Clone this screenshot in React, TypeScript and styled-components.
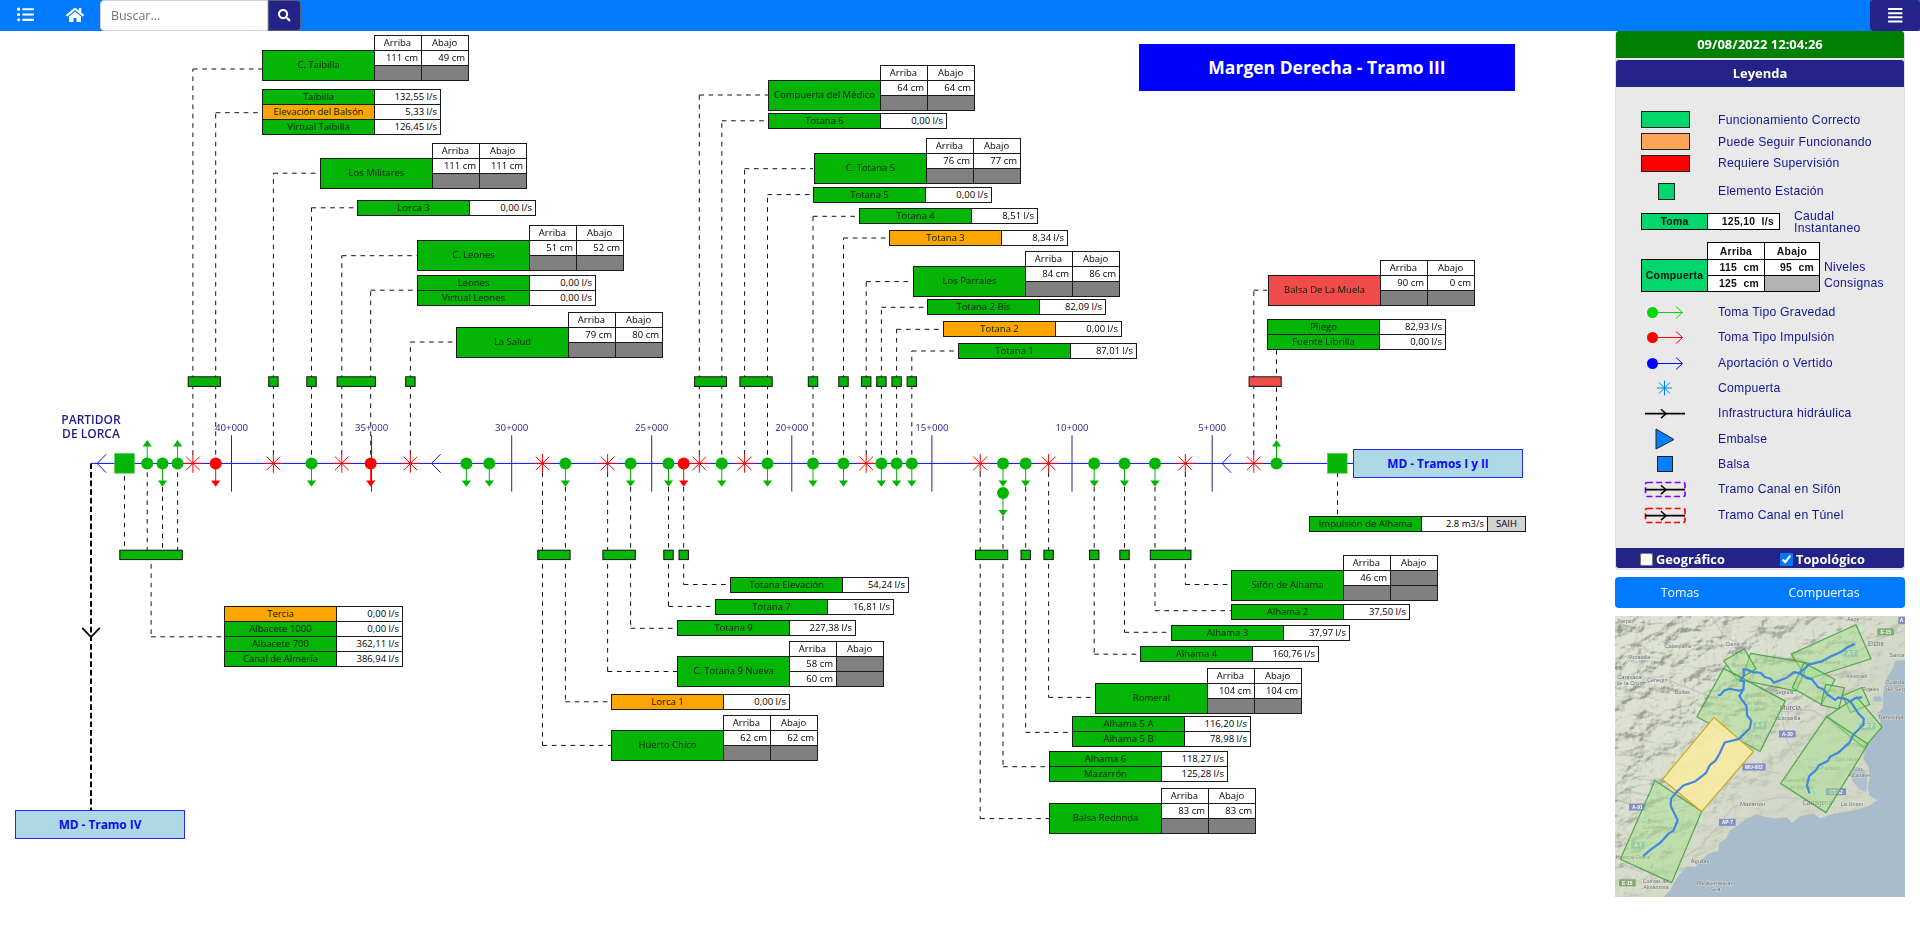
import React from 'react';
import styled, { createGlobalStyle } from 'styled-components';
import { FaListUl, FaHome, FaSearch, FaAlignJustify } from 'react-icons/fa';

const UI = '"Open Sans", "Noto Sans", sans-serif';
const GREEN = '#05b505';
const ORANGE = '#ffa500';
const RED = '#f04c4c';
const NAVY = '#232388';

const GlobalStyle = createGlobalStyle`
  * { box-sizing: border-box; }
  body { margin: 0; background: #fff; font-family: ${UI}; overflow: hidden; }
`;

/* ---------- page frame ---------- */

const Page = styled.div`
  display: flex;
  flex-direction: column;
  width: 1920px;
  height: 937px;
`;

const Navbar = styled.header`
  display: flex;
  height: 31px;
  flex: none;
  background: #007bff;
  color: #fff;
`;

const NavIcon = styled.button<{ $w: number; $size: number; $pad: number }>`
  display: flex;
  width: ${(p) => p.$w}px;
  padding: 0 0 2px ${(p) => p.$pad}px;
  align-items: center;
  border: 0;
  background: none;
  color: inherit;
  font-size: ${(p) => p.$size}px;
`;

const SearchInput = styled.input`
  width: 168px;
  height: 31px;
  padding: 0 10px;
  border: 1px solid #ced4da;
  border-radius: 4px 0 0 4px;
  font: 12.4px ${UI};
  color: #495057;
  outline: none;
  &::placeholder { color: #6c757d; opacity: 1; }
`;

const SearchButton = styled.button`
  display: flex;
  width: 33px;
  height: 31px;
  align-items: center;
  justify-content: center;
  padding: 0;
  border: 1px solid #55607a;
  border-radius: 0 4px 4px 0;
  background: ${NAVY};
  color: #fff;
  font-size: 12.5px;
`;

const MenuButton = styled.button`
  display: flex;
  width: 50px;
  margin-left: auto;
  align-items: center;
  justify-content: center;
  border: 0;
  border-radius: 4px;
  background: ${NAVY};
  color: #fff;
  font-size: 16.5px;
`;

const Main = styled.main`
  display: flex;
  flex: 1;
`;

/* ---------- diagram ---------- */

const Canvas = styled.section`
  position: relative;
  width: 1615px;
  flex: none;
`;

const Wires = styled.svg`
  position: absolute;
  left: 0;
  top: 0;
`;

const Node = styled.div<{ $x: number; $y: number }>`
  position: absolute;
  left: ${(p) => p.$x}px;
  top: ${(p) => p.$y - 31}px;
  display: flex;
  align-items: flex-end;
  font-size: 9.5px;
  line-height: 14px;
  color: #000;
  white-space: nowrap;
`;

const FlowTable = styled.div<{ $extra?: boolean }>`
  display: grid;
  grid-template-columns: 111px 65px ${(p) => (p.$extra ? '37px' : '')};
  grid-auto-rows: 14px;
  gap: 1px;
  padding: 1px;
  background: #1a1a1a;
`;

const NameCell = styled.div<{ $bg: string }>`
  background: ${(p) => p.$bg};
  color: #001e00;
  text-align: center;
`;

const GateName = styled(NameCell)`
  width: 113px;
  height: 31px;
  border: 1px solid #1a1a1a;
  line-height: 28px;
`;

const LevelTable = styled.div`
  display: grid;
  grid-template-columns: 46px 46px;
  grid-auto-rows: 14px;
  gap: 1px;
  padding: 1px;
  margin-left: -1px;
  background: #1a1a1a;
`;

const HeadCell = styled.div`
  background: #fff;
  text-align: center;
  padding-right: 1px;
`;

const ValueCell = styled.div<{ $empty?: boolean }>`
  padding-right: 3px;
  background: ${(p) => (p.$empty ? '#808080' : '#fff')};
  text-align: right;
`;

const TagCell = styled.div`
  background: #d3d3d3;
  text-align: center;
`;

const Title = styled.h1`
  position: absolute;
  left: 1139px;
  top: 13px;
  width: 376px;
  height: 47px;
  margin: 0;
  background: #00f;
  color: #fff;
  font-size: 17.5px;
  font-weight: 700;
  line-height: 47px;
  text-align: center;
`;

const SectionLink = styled.a<{ $x: number; $y: number; $w: number }>`
  position: absolute;
  left: ${(p) => p.$x}px;
  top: ${(p) => p.$y - 31}px;
  width: ${(p) => p.$w}px;
  height: 29px;
  border: 1px solid #2525f5;
  background: #add8e6;
  color: #0c0cf0;
  font-size: 11.8px;
  font-weight: 700;
  line-height: 27px;
  text-align: center;
`;

const Place = styled.div`
  position: absolute;
  left: 41px;
  top: 382px;
  width: 100px;
  color: #1f1f8a;
  font-size: 12px;
  font-weight: 600;
  line-height: 14px;
  text-align: center;
`;

const Km = styled.div<{ $x: number }>`
  position: absolute;
  left: ${(p) => p.$x - 30}px;
  top: 390px;
  width: 60px;
  color: #26268c;
  font-size: 9.7px;
  line-height: 14px;
  text-align: center;
`;

type Flow = { x: number; y: number; rows: [string, string, string?][] };
const flows: Flow[] = [
  { x: 262, y: 89, rows: [['Taibilla', '132,55'], ['Elevación del Balsón', '5,33', ORANGE], ['Virtual Taibilla', '126,45']] },
  { x: 357, y: 200, rows: [['Lorca 3', '0,00']] },
  { x: 417, y: 275, rows: [['Leones', '0,00'], ['Virtual Leones', '0,00']] },
  { x: 768, y: 113, rows: [['Totana 6', '0,00']] },
  { x: 813, y: 187, rows: [['Totana 5', '0,00']] },
  { x: 859, y: 208, rows: [['Totana 4', '8,51']] },
  { x: 889, y: 230, rows: [['Totana 3', '8,34', ORANGE]] },
  { x: 927, y: 299, rows: [['Totana 2 Bis', '82,09']] },
  { x: 943, y: 321, rows: [['Totana 2', '0,00', ORANGE]] },
  { x: 958, y: 343, rows: [['Totana 1', '87,01']] },
  { x: 1267, y: 319, rows: [['Pliego', '82,93'], ['Fuente Librilla', '0,00']] },
  { x: 224, y: 606, rows: [['Tercia', '0,00', ORANGE], ['Albacete 1000', '0,00'], ['Albacete 700', '362,11'], ['Canal de Almería', '386,94']] },
  { x: 730, y: 577, rows: [['Totana Elevación', '54,24']] },
  { x: 715, y: 599, rows: [['Totana 7', '16,81']] },
  { x: 677, y: 620, rows: [['Totana 9', '227,38']] },
  { x: 611, y: 694, rows: [['Lorca 1', '0,00', ORANGE]] },
  { x: 1231, y: 604, rows: [['Alhama 2', '37,50']] },
  { x: 1171, y: 625, rows: [['Alhama 3', '37,97']] },
  { x: 1140, y: 646, rows: [['Alhama 4', '160,76']] },
  { x: 1072, y: 716, rows: [['Alhama 5 A', '116,20'], ['Alhama 5 B', '78,98']] },
  { x: 1049, y: 751, rows: [['Alhama 6', '118,27'], ['Mazarrón', '125,28']] },
];

/* y is the top of the header row, one row above the name box */
type Gate = { x: number; y: number; name: string; cells: (number | null)[]; bg?: string };
const gates: Gate[] = [
  { x: 262, y: 35, name: 'C. Taibilla', cells: [111, 49, null, null] },
  { x: 320, y: 143, name: 'Los Militares', cells: [111, 111, null, null] },
  { x: 417, y: 225, name: 'C. Leones', cells: [51, 52, null, null] },
  { x: 456, y: 312, name: 'La Salud', cells: [79, 80, null, null] },
  { x: 768, y: 65, name: 'Compuerta del Médico', cells: [64, 64, null, null] },
  { x: 814, y: 138, name: 'C. Totana 5', cells: [76, 77, null, null] },
  { x: 913, y: 251, name: 'Los Parrales', cells: [84, 86, null, null] },
  { x: 1268, y: 260, name: 'Balsa De La Muela', cells: [90, 0, null, null], bg: RED },
  { x: 677, y: 641, name: 'C. Totana 9 Nueva', cells: [58, null, 60, null] },
  { x: 611, y: 715, name: 'Huerto Chico', cells: [62, 62, null, null] },
  { x: 1231, y: 555, name: 'Sifón de Alhama', cells: [46, null, null, null] },
  { x: 1095, y: 668, name: 'Romeral', cells: [104, 104, null, null] },
  { x: 1049, y: 788, name: 'Balsa Redonda', cells: [83, 83, null, null] },
];

const AXIS = 463.4;

/* [x, y of the elbow, x where the wire meets its box] */
const upper: [number, number, number][] = [
  [192.9, 69, 262], [215.7, 112.7, 262], [273.4, 173.2, 320], [311.5, 207.8, 357], [341.8, 255.7, 417],
  [370.7, 290.2, 417], [410.4, 342, 456], [699.3, 95, 768], [721.8, 120.8, 768], [744.6, 168.7, 813],
  [767.5, 194.6, 813], [813, 216.3, 859], [843.5, 238, 889], [866.2, 281.6, 912], [881.4, 307.3, 927],
  [896.6, 329.3, 943], [911.8, 351, 958], [1253.8, 290.2, 1267],
];
/* [x, y where the wire leaves the symbol, y of the elbow, x of the box] */
const lower: [number, number, number, number][] = [
  [542.5, 472.3, 745.4, 611], [565.4, 487, 701.8, 611], [607.6, 472.3, 671.5, 677], [630.6, 487, 628.3, 677],
  [668.5, 487, 606.4, 715], [683.7, 487, 584.5, 730], [980.2, 472.3, 818.6, 1049], [1003, 516, 766.7, 1049],
  [1025.7, 487, 732.4, 1072], [1048.6, 472.3, 697.4, 1095], [1094.2, 487, 654.2, 1140], [1124.5, 487, 632.3, 1170],
  [1155, 487, 610.7, 1231], [1185.3, 472.3, 584.5, 1231],
];
const upperStations: [number, number, string?][] = [
  [192.9, 215.7], [273.4, 273.4], [311.5, 311.5], [341.8, 370.7], [410.4, 410.4], [699.3, 721.8], [744.6, 767.5],
  [813, 813], [843.5, 843.5], [866.2, 866.2], [881.4, 881.4], [896.6, 896.6], [911.8, 911.8], [1253.8, 1276.5, RED],
];
const lowerStations: [number, number][] = [
  [124.5, 177.6], [542.5, 565.4], [607.6, 630.6], [668.5, 668.5], [683.7, 683.7], [980.2, 1003],
  [1025.7, 1025.7], [1048.6, 1048.6], [1094.2, 1094.2], [1124.5, 1124.5], [1155, 1186.3],
];
const stars = [192.9, 273.4, 341.8, 410.4, 542.5, 607.6, 699.3, 744.6, 866.2, 980.2, 1048.6, 1185.3, 1253.8];
const greenDown = [162.5, 311.5, 466.4, 489.3, 565.4, 630.6, 668.5, 721.8, 767.5, 813, 843.5, 881.4, 896.6, 911.8, 1003, 1025.7, 1094.2, 1124.5, 1155];
const greenUp = [147.2, 177.6, 1276.5];
const redDown = [215.7, 370.7, 683.7];
const kms: [number, string][] = [
  [231.5, '40+000'], [371.6, '35+000'], [511.7, '30+000'], [651.7, '25+000'],
  [791.8, '20+000'], [931.9, '15+000'], [1072, '10+000'], [1212.2, '5+000'],
];

const Intake = ({ x, y = AXIS, color, up }: { x: number; y?: number; color: string; up?: boolean }) => (
  <g transform={`translate(${x} ${y})${up ? ' scale(1 -1)' : ''}`} fill={color} stroke={color}>
    <circle r="6" stroke="none" />
    <path d="M0 5V18" fill="none" />
    <path d="M-4.6 17H4.6L0 23.3Z" stroke="none" />
  </g>
);

const Star = ({ x }: { x: number }) => (
  <path
    transform={`translate(${x} ${AXIS})`}
    d="M0-9.4V9.4M-9.4 0H9.4M-6.8-6.8L6.8 6.8M-6.8 6.8L6.8-6.8"
    stroke="#f00"
    fill="none"
  />
);

const Diagram = () => (
  <Canvas>
    <Wires width="1615" height="906" viewBox="0 31 1615 906">
      <g stroke="#111" strokeWidth="1" strokeDasharray="4.67 4.67" fill="none">
        {upper.map(([x, y, bx]) => (
          <React.Fragment key={x}>
            <path d={`M${x} 454.7V${y}`} />
            <path d={`M${x} ${y}H${bx}`} />
          </React.Fragment>
        ))}
        {lower.map(([x, y0, y1, bx]) => (
          <React.Fragment key={x}>
            <path d={`M${x} ${y0}V551`} />
            <path d={`M${x} 564V${y1}`} />
            <path d={`M${x} ${y1}H${bx}`} />
          </React.Fragment>
        ))}
        <path d="M1276.5 350V441" />
        <path d="M124.5 476V551" />
        <path d="M147.2 472.3V551" />
        <path d="M162.5 487V551" />
        <path d="M177.6 472.3V551" />
        <path d="M151.1 564V636.8" />
        <path d="M151.1 636.8H224" />
        <path d="M1337.5 472.3V517" />
      </g>
      <path d={`M91 ${AXIS}V810`} stroke="#000" strokeWidth="2" strokeDasharray="5.7 2.9" />
      <path d="M82.2 627.8L91 637L99.8 627.8" stroke="#000" strokeWidth="1.7" fill="none" />
      <path d={`M91 ${AXIS}H1353`} stroke="#0a0aee" />
      {kms.map(([x]) => (
        <path key={x} d={`M${x} 435.3V491.6`} stroke="#26268c" />
      ))}
      {[97.2, 431.6, 1222].map((x) => (
        <path key={x} d={`M${x + 9} 454.2L${x} ${AXIS}L${x + 9} 472.7`} stroke="#0f0fff" fill="none" />
      ))}
      {upperStations.map(([a, b, c]) => (
        <rect key={a} x={a - 4.7} y="376.8" width={b - a + 9.4} height="9.6" fill={c || GREEN} stroke="#111" />
      ))}
      {lowerStations.map(([a, b]) => (
        <rect key={a} x={a - 4.7} y="550.2" width={b - a + 9.4} height="9.4" fill={GREEN} stroke="#111" />
      ))}
      {[124.5, 1337.3].map((x) => (
        <rect key={x} x={x - 9.8} y="453.6" width="19.6" height="19.6" fill={GREEN} stroke="#4fc84f" strokeWidth="0.7" />
      ))}
      {stars.map((x) => <Star key={x} x={x} />)}
      {greenDown.map((x) => <Intake key={x} x={x} color={GREEN} />)}
      {greenUp.map((x) => <Intake key={x} x={x} color={GREEN} up />)}
      {redDown.map((x) => <Intake key={x} x={x} color="#f00" />)}
      <Intake x={1003} y={493} color={GREEN} />
    </Wires>
    <Title>Margen Derecha - Tramo III</Title>
    <Place>PARTIDOR<br />DE LORCA</Place>
    {kms.map(([x, t]) => <Km key={t} $x={x}>{t}</Km>)}
    <SectionLink $x={1353} $y={449} $w={170}>MD - Tramos I y II</SectionLink>
    <SectionLink $x={15} $y={810} $w={170}>MD - Tramo IV</SectionLink>
    {gates.map((g) => (
      <Node key={g.name} $x={g.x} $y={g.y}>
        <GateName $bg={g.bg || GREEN}>{g.name}</GateName>
        <LevelTable>
          <HeadCell>Arriba</HeadCell>
          <HeadCell>Abajo</HeadCell>
          {g.cells.map((c, i) => (
            <ValueCell key={i} $empty={c === null}>{c === null ? '' : `${c} cm`}</ValueCell>
          ))}
        </LevelTable>
      </Node>
    ))}
    {flows.map((f) => (
      <Node key={f.rows[0][0]} $x={f.x} $y={f.y}>
        <FlowTable>
          {f.rows.map(([name, value, bg]) => (
            <React.Fragment key={name}>
              <NameCell $bg={bg || GREEN}>{name}</NameCell>
              <ValueCell>{value} l/s</ValueCell>
            </React.Fragment>
          ))}
        </FlowTable>
      </Node>
    ))}
    <Node $x={1309} $y={516}>
      <FlowTable $extra>
        <NameCell $bg={GREEN}>Impulsión de Alhama</NameCell>
        <ValueCell>2.8 m3/s</ValueCell>
        <TagCell>SAIH</TagCell>
      </FlowTable>
    </Node>
  </Canvas>
);

/* ---------- sidebar ---------- */

const Sidebar = styled.aside`
  width: 290px;
  flex: none;
`;

const Card = styled.div`
  height: 539px;
  border: 1px solid #dcdcdc;
  border-top: 0;
  border-radius: 4px;
  background: #e9e9e9;
`;

const Bar = styled.div<{ $bg: string }>`
  height: 27px;
  margin-bottom: 2px;
  border-radius: 3px 3px 0 0;
  background: ${(p) => p.$bg};
  color: #fff;
  font-size: 13px;
  font-weight: 700;
  line-height: 26px;
  text-align: center;
`;

const Legend = styled.div`
  height: 459px;
  padding: 20px 0 0 16px;
  color: #14149a;
  font: 12.2px "Liberation Sans", Arial, sans-serif;
  letter-spacing: 0.25px;
`;

const LegendRow = styled.div<{ $h: number }>`
  display: flex;
  height: ${(p) => p.$h}px;
  align-items: center;
  white-space: nowrap;
`;

const Symbol = styled.div`
  width: 86px;
  height: 24px;
  flex: none;
  svg { display: block; overflow: visible; }
`;

const Swatch = styled.div<{ $bg: string; $small?: boolean }>`
  width: ${(p) => (p.$small ? 17 : 49)}px;
  height: 17px;
  margin: 0 ${(p) => (p.$small ? 43 : 28)}px 0 ${(p) => (p.$small ? 26 : 9)}px;
  border: 1px solid #222;
  background: ${(p) => p.$bg};
`;

const SampleFlow = styled.div`
  display: grid;
  grid-template-columns: 65px 71px;
  height: 17px;
  gap: 1px;
  padding: 1px;
  margin: 0 14px 0 9px;
  background: #000;
`;

const SampleGate = styled.div`
  display: grid;
  grid-template-columns: 65px 56px 54px;
  grid-template-rows: 16px 15px 15px;
  gap: 1px;
  margin: 0 5px 0 10px;
`;

const Cell = styled.div<{ $bg?: string; $right?: boolean; $tall?: boolean; $blank?: boolean }>`
  grid-row: ${(p) => (p.$tall ? 'span 2' : 'auto')};
  display: flex;
  align-items: center;
  justify-content: ${(p) => (p.$right ? 'flex-end' : 'center')};
  padding: 0 ${(p) => (p.$right ? 5 : 0)}px 0 0;
  background: ${(p) => p.$bg || '#fff'};
  box-shadow: ${(p) => (p.$blank ? 'none' : '0 0 0 1px #000')};
  color: #111;
  font-size: 10.4px;
  font-weight: 700;
  letter-spacing: 0.3px;
  word-spacing: 3px;
`;

const TwoLines = styled.div<{ $lh: number; $top?: number }>`
  line-height: ${(p) => p.$lh}px;
  padding-top: ${(p) => p.$top || 0}px;
`;

const Footer = styled.div`
  display: flex;
  height: 20px;
  align-items: center;
  border-radius: 0 0 3px 3px;
  background: ${NAVY};
  color: #fff;
  font-size: 12.8px;
  font-weight: 700;
`;

const Check = styled.label<{ $left: number; $w: number }>`
  display: flex;
  width: ${(p) => p.$w}px;
  padding: 2px 0 0 ${(p) => p.$left}px;
  align-items: center;
  gap: 3px;
  input { width: 13px; height: 13px; margin: 0; }
`;

const Tabs = styled.div`
  display: flex;
  height: 31px;
  margin: 7px 0 8px;
  border-radius: 4px;
  background: #007bff;
`;

const Tab = styled.button<{ $w: number }>`
  width: ${(p) => p.$w}px;
  padding: 0;
  border: 0;
  background: none;
  color: #fff;
  font: 12.4px ${UI};
`;

const MapSvg = styled.svg`
  display: block;
  width: 290px;
  height: 281px;
`;

const FlowSymbol = ({ color }: { color: string }) => (
  <svg width="86" height="24" fill="none" stroke={color}>
    <circle cx="20.5" cy="12.5" r="5.5" fill={color} stroke="none" />
    <path d="M26 12.5H50M44 6.5L50.5 12.5L44 18.5" />
  </svg>
);

const CanalSymbol = ({ frame }: { frame?: string }) => (
  <svg width="86" height="24" fill="none">
    {frame && <rect x="13.5" y="5.5" width="39.5" height="14" rx="1.5" stroke={frame} strokeWidth="1.7" strokeDasharray="6 3.2" />}
    <path d="M13 12.7H53" stroke="#000" strokeWidth="1.7" />
    <path d="M29 8.3L34 12.7L29 17.1" stroke="#000" strokeWidth="1.5" />
  </svg>
);

const Row = ({ icon, text }: { icon: React.ReactNode; text: string }) => (
  <LegendRow $h={25.35}>
    <Symbol>{icon}</Symbol>
    {text}
  </LegendRow>
);

const zones = [
  '574,162 768,74 813,176 622,238',
  '452,160 625,189 588,273 424,240',
  '371,182 433,146 468,207 412,240',
  '371,205 556,303 480,454 291,350',
  '612,188 705,238 664,313 577,263',
  '677,253 733,263 716,327 663,315',
  '727,287 786,262 809,313 752,337',
  '680,350 770,290 846,380 792,443',
  '680,349 804,432 678,637 542,550',
  '165,541 305,634 215,847 61,777',
];

const COAST =
  'M915 180L885 182L878 205L862 230L852 262L848 300L850 322L830 342L840 352L842 385L812 418L796 450L790 475L806 500L810 530L803 560L808 585L832 600L805 618L752 633L700 640L660 655L640 640L600 648L576 668L560 650L530 655L500 650L468 643L440 655L412 676L390 690L378 715L358 727L355 752L325 760L300 782L285 800L262 798L232 830L210 870L190 890H915Z';

const towns: [number, number, number, string][] = [
  [76, 68, 14, 'Nerpio'], [234, 144, 15, 'Calasparra'], [397, 138, 15, 'Cieza'], [118, 177, 15, 'Moratalla'],
  [88, 236, 16, 'Caravaca'], [88, 254, 16, 'de la Cruz'], [172, 247, 15, 'Cehegín'], [247, 281, 15, 'Bullas'],
  [760, 64, 15, 'Aspe'], [828, 138, 18, 'Elche'], [890, 172, 16, 'Santa'], [884, 253, 16, 'Guarda'],
  [886, 272, 16, 'del Seg'], [770, 235, 15, 'Almoradí'], [571, 329, 20, 'Murcia'], [562, 360, 15, 'Alcantarilla'],
  [552, 281, 16, 'Segura'], [872, 357, 17, 'Torrevieja'], [458, 618, 17, 'Mazarrón'], [652, 614, 18, 'Cartagena'],
  [756, 616, 16, 'La Unión'], [776, 512, 15, 'Los'], [780, 530, 15, 'Alcázares'], [300, 787, 16, 'Águilas'],
  [168, 849, 15, 'Cuevas del'], [168, 866, 15, 'Almanzora'], [346, 854, 16, 'Mediterranean'], [346, 872, 16, 'Sea'],
  [99, 777, 15, 'Huércal-Overa'], [410, 162, 15, 'Abarán'], [812, 272, 14, 'Rojales'],
];
const fadedTowns: [number, number, string][] = [
  [728, 132, 'Crevillent'], [618, 162, 'Abanilla'], [345, 345, 'Pliego'], [336, 298, 'Mula'], [466, 290, 'Alguazas'],
  [466, 316, 'Las Torres'], [462, 334, 'de Cotillas'], [462, 413, 'Librilla'], [680, 277, 'Orihuela'], [692, 192, 'Albatera'],
  [742, 483, 'San Javier'], [672, 510, 'Torre-Pacheco'], [600, 546, 'Fuente Álamo'], [602, 565, 'de Murcia'],
  [166, 667, 'Puerto'], [166, 686, 'Lumbreras'], [204, 760, 'Pulpí'], [418, 200, 'Blanca'], [768, 440, 'del Pinatar'],
];
const shields: [number, number, string, string][] = [
  [857, 96, 'E-15', '#7fae73'], [905, 62, 'A', '#8290c2'], [562, 402, 'A-30', '#8290c2'], [462, 501, 'MU-602', '#8290c2'],
  [382, 667, 'AP-7', '#8290c2'], [112, 621, 'A-91', '#8290c2'], [82, 848, 'E-15', '#7fae73'],
  [753, 161, 'A-7', '#8fb8bd'], [479, 377, 'A-7', '#8fb8bd'], [114, 736, 'A-7', '#8fb8bd'], [802, 380, 'AP-7', '#8fb8bd'],
  [708, 575, 'CT-32', '#8290c2'],
];

const AreaMap = () => (
  <MapSvg viewBox="45 48 870 842" preserveAspectRatio="none" fontFamily="Liberation Sans, sans-serif">
    <defs>
      <filter id="relief" x="0" y="0" width="100%" height="100%">
        <feTurbulence type="fractalNoise" baseFrequency="0.016 0.022" numOctaves="5" seed="11" result="n" />
        <feColorMatrix in="n" values="0 0 0 0 0  0 0 0 0 0  0 0 0 0 0  1 0 0 0 0" />
        <feDiffuseLighting surfaceScale="42" lightingColor="#fff" diffuseConstant="1.25">
          <feDistantLight azimuth="225" elevation="52" />
        </feDiffuseLighting>
      </filter>
      <linearGradient id="flat" x1="0.2" y1="0.1" x2="0.8" y2="0.65">
        <stop offset="0" stopColor="#fff" />
        <stop offset="0.5" stopColor="#999" />
        <stop offset="0.75" stopColor="#222" />
      </linearGradient>
      <mask id="hills"><rect x="45" y="48" width="870" height="842" fill="url(#flat)" /></mask>
    </defs>
    <rect x="45" y="48" width="870" height="842" fill="#d3d8c5" />
    <g mask="url(#hills)">
      <rect x="45" y="48" width="870" height="842" filter="url(#relief)" opacity="0.26" style={{ mixBlendMode: 'multiply' }} />
    </g>
    <g fill="none" stroke="#c1bfc9" strokeWidth="3">
      <path d="M335 48L372 110L440 140L455 240L540 320L560 420L620 520L650 600" />
      <path d="M915 90L830 120L720 190L600 290L540 330L450 440L380 560L300 610L160 640L60 600" />
      <path d="M540 335L640 330L720 390L800 440M540 520L430 500M650 600L540 590L400 620L300 740L180 820L60 790" />
      <path d="M60 240L180 230L330 290L520 320M45 180L140 110L260 60" />
    </g>
    <path d={COAST} fill="#a9bccc" />
    <path d="M765 500L790 505L802 530L800 575L782 570L758 545L750 515Z" fill="#adc0cd" />
    <path d="M818 290L842 288L846 304L824 304Z" fill="#a9bccc" />
    <g fill="#8d9a86" fontSize="15" textAnchor="middle">
      {fadedTowns.map(([x, y, t]) => <text key={t} x={x} y={y}>{t}</text>)}
    </g>
    <g fill="#5e6264" stroke="#eef0ea" strokeWidth="2" paintOrder="stroke" textAnchor="middle">
      {towns.map(([x, y, s, t]) => <text key={t} x={x} y={y} fontSize={s + 1}>{t}</text>)}
    </g>
    {shields.map(([x, y, t, c]) => (
      <g key={`${t}${x}`}>
        <rect x={x - t.length * 5 - 5} y={y - 11} width={t.length * 10 + 10} height="21" fill={c} />
        <text x={x} y={y + 5} fill="#fff" fontSize="15" fontWeight="700" textAnchor="middle">{t}</text>
      </g>
    ))}
    <g fill="#a5e08d" fillOpacity="0.48" stroke="#45a045" strokeWidth="3.6" strokeOpacity="0.9">
      {zones.map((p) => <polygon key={p} points={p} />)}
    </g>
    <polygon points="342,352 460,454 305,634 187,538" fill="#f7eaa4" fillOpacity="0.93" stroke="#cdaa23" strokeWidth="3.6" />
    <g fill="none" stroke="#3f87e0" strokeWidth="6.5" strokeLinejoin="round" strokeLinecap="round">
      <path d="M763 133L742 142L722 156L690 170L665 184L628 193L598 219L582 216L560 233L522 248L512 236L494 231L482 218L458 216L440 208L430 208L432 226L421 242L432 244L430 268L418 288L430 305L440 318L441 345L454 362L449 385L416 417L374 427L358 462L346 482L330 494L318 518L285 544L250 556L232 573L213 596L212 617L233 660L220 692L206 700L180 728L156 745L131 766" />
      <path d="M430 268L418 272L388 266L372 272L362 284L356 285" />
      <path d="M598 219L617 232L636 238L654 261L670 268L682 283L706 300L714 292L738 297L752 305L775 340L791 356L790 374L760 404L748 428L714 458L690 470L684 482L656 496L648 510L628 527L621 556L628 577" />
      <path d="M752 303L765 295L784 292" />
    </g>
  </MapSvg>
);

export default function App() {
  return (
    <Page>
      <GlobalStyle />
      <Navbar>
        <NavIcon $w={58} $size={17} $pad={17}><FaListUl /></NavIcon>
        <NavIcon $w={42} $size={18} $pad={8}><FaHome /></NavIcon>
        <SearchInput placeholder="Buscar..." />
        <SearchButton><FaSearch /></SearchButton>
        <MenuButton><FaAlignJustify /></MenuButton>
      </Navbar>
      <Main>
        <Diagram />
        <Sidebar>
          <Card>
            <Bar $bg="#008000">09/08/2022 12:04:26</Bar>
            <Bar $bg={NAVY}>Leyenda</Bar>
            <Legend>
              <LegendRow $h={21.8}><Swatch $bg="#00d66b" />Funcionamiento Correcto</LegendRow>
              <LegendRow $h={21.8}><Swatch $bg="#ffa55a" />Puede Seguir Funcionando</LegendRow>
              <LegendRow $h={21.8}><Swatch $bg="#f00" />Requiere Supervisión</LegendRow>
              <LegendRow $h={34}><Swatch $bg="#00d66b" $small />Elemento Estación</LegendRow>
              <LegendRow $h={27}>
                <SampleFlow>
                  <Cell $bg="#00d66b" $blank>Toma</Cell>
                  <Cell $right $blank>125,10 l/s</Cell>
                </SampleFlow>
                <TwoLines $lh={12}>Caudal<br />Instantaneo</TwoLines>
              </LegendRow>
              <LegendRow $h={64}>
                <SampleGate>
                  <span />
                  <Cell>Arriba</Cell>
                  <Cell>Abajo</Cell>
                  <Cell $bg="#00d66b" $tall>Compuerta</Cell>
                  <Cell $right>115 cm</Cell>
                  <Cell $right>95 cm</Cell>
                  <Cell $right>125 cm</Cell>
                  <Cell $bg="#b3b3b3" />
                </SampleGate>
                <TwoLines $lh={15.4} $top={17}>Niveles<br />Consignas</TwoLines>
              </LegendRow>
              <Row icon={<FlowSymbol color="#00d600" />} text="Toma Tipo Gravedad" />
              <Row icon={<FlowSymbol color="#f00" />} text="Toma Tipo Impulsión" />
              <Row icon={<FlowSymbol color="#00f" />} text="Aportación o Vertido" />
              <Row
                icon={
                  <svg width="86" height="24" fill="none" stroke="#0080ff">
                    <path d="M32.5 4.5V19.5M25 12H40M27 6.5L38 17.5M27 17.5L38 6.5" />
                  </svg>
                }
                text="Compuerta"
              />
              <Row icon={<CanalSymbol />} text="Infrastructura hidráulica" />
              <Row
                icon={<svg width="86" height="24"><path d="M24 2V22L42 12.5Z" fill="#0080ff" stroke="#222" /></svg>}
                text="Embalse"
              />
              <Row
                icon={<svg width="86" height="24"><rect x="25.5" y="4.5" width="15" height="15" fill="#0080ff" stroke="#222" /></svg>}
                text="Balsa"
              />
              <Row icon={<CanalSymbol frame="#8000ff" />} text="Tramo Canal en Sifón" />
              <Row icon={<CanalSymbol frame="#f00" />} text="Tramo Canal en Túnel" />
            </Legend>
            <Footer>
              <Check $left={24} $w={164}><input type="checkbox" />Geográfico</Check>
              <Check $left={0} $w={100}><input type="checkbox" defaultChecked />Topológico</Check>
            </Footer>
          </Card>
          <Tabs>
            <Tab $w={130}>Tomas</Tab>
            <Tab $w={158}>Compuertas</Tab>
          </Tabs>
          <AreaMap />
        </Sidebar>
      </Main>
    </Page>
  );
}
